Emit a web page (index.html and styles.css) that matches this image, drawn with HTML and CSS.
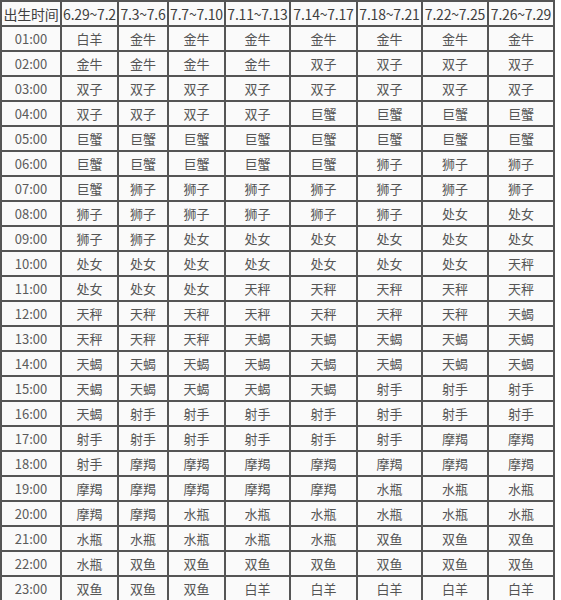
FILE: index.html
```html
<!DOCTYPE html>
<html lang="zh-CN">
<head>
<meta charset="utf-8">
<title>上升星座表</title>
<link rel="stylesheet" href="styles.css">
</head>
<body>
<table class="chart">
<colgroup>
<col class="c1"><col class="c2"><col class="c3"><col class="c4"><col class="c5"><col class="c6"><col class="c7"><col class="c8"><col class="c9">
</colgroup>
<thead>
<tr class="head"><th class="label">出生时间</th><th>6.29~7.2</th><th>7.3~7.6</th><th>7.7~7.10</th><th>7.11~7.13</th><th>7.14~7.17</th><th>7.18~7.21</th><th>7.22~7.25</th><th>7.26~7.29</th></tr>
</thead>
<tbody>
<tr><td class="time">01:00</td><td>白羊</td><td>金牛</td><td>金牛</td><td>金牛</td><td>金牛</td><td>金牛</td><td>金牛</td><td>金牛</td></tr>
<tr><td class="time">02:00</td><td>金牛</td><td>金牛</td><td>金牛</td><td>金牛</td><td>双子</td><td>双子</td><td>双子</td><td>双子</td></tr>
<tr><td class="time">03:00</td><td>双子</td><td>双子</td><td>双子</td><td>双子</td><td>双子</td><td>双子</td><td>双子</td><td>双子</td></tr>
<tr><td class="time">04:00</td><td>双子</td><td>双子</td><td>双子</td><td>双子</td><td>巨蟹</td><td>巨蟹</td><td>巨蟹</td><td>巨蟹</td></tr>
<tr><td class="time">05:00</td><td>巨蟹</td><td>巨蟹</td><td>巨蟹</td><td>巨蟹</td><td>巨蟹</td><td>巨蟹</td><td>巨蟹</td><td>巨蟹</td></tr>
<tr><td class="time">06:00</td><td>巨蟹</td><td>巨蟹</td><td>巨蟹</td><td>巨蟹</td><td>巨蟹</td><td>狮子</td><td>狮子</td><td>狮子</td></tr>
<tr><td class="time">07:00</td><td>巨蟹</td><td>狮子</td><td>狮子</td><td>狮子</td><td>狮子</td><td>狮子</td><td>狮子</td><td>狮子</td></tr>
<tr><td class="time">08:00</td><td>狮子</td><td>狮子</td><td>狮子</td><td>狮子</td><td>狮子</td><td>狮子</td><td>处女</td><td>处女</td></tr>
<tr><td class="time">09:00</td><td>狮子</td><td>狮子</td><td>处女</td><td>处女</td><td>处女</td><td>处女</td><td>处女</td><td>处女</td></tr>
<tr><td class="time">10:00</td><td>处女</td><td>处女</td><td>处女</td><td>处女</td><td>处女</td><td>处女</td><td>处女</td><td>天秤</td></tr>
<tr><td class="time">11:00</td><td>处女</td><td>处女</td><td>处女</td><td>天秤</td><td>天秤</td><td>天秤</td><td>天秤</td><td>天秤</td></tr>
<tr><td class="time">12:00</td><td>天秤</td><td>天秤</td><td>天秤</td><td>天秤</td><td>天秤</td><td>天秤</td><td>天秤</td><td>天蝎</td></tr>
<tr><td class="time">13:00</td><td>天秤</td><td>天秤</td><td>天秤</td><td>天蝎</td><td>天蝎</td><td>天蝎</td><td>天蝎</td><td>天蝎</td></tr>
<tr><td class="time">14:00</td><td>天蝎</td><td>天蝎</td><td>天蝎</td><td>天蝎</td><td>天蝎</td><td>天蝎</td><td>天蝎</td><td>天蝎</td></tr>
<tr><td class="time">15:00</td><td>天蝎</td><td>天蝎</td><td>天蝎</td><td>天蝎</td><td>天蝎</td><td>射手</td><td>射手</td><td>射手</td></tr>
<tr><td class="time">16:00</td><td>天蝎</td><td>射手</td><td>射手</td><td>射手</td><td>射手</td><td>射手</td><td>射手</td><td>射手</td></tr>
<tr><td class="time">17:00</td><td>射手</td><td>射手</td><td>射手</td><td>射手</td><td>射手</td><td>射手</td><td>摩羯</td><td>摩羯</td></tr>
<tr><td class="time">18:00</td><td>射手</td><td>摩羯</td><td>摩羯</td><td>摩羯</td><td>摩羯</td><td>摩羯</td><td>摩羯</td><td>摩羯</td></tr>
<tr><td class="time">19:00</td><td>摩羯</td><td>摩羯</td><td>摩羯</td><td>摩羯</td><td>摩羯</td><td>水瓶</td><td>水瓶</td><td>水瓶</td></tr>
<tr><td class="time">20:00</td><td>摩羯</td><td>摩羯</td><td>水瓶</td><td>水瓶</td><td>水瓶</td><td>水瓶</td><td>水瓶</td><td>水瓶</td></tr>
<tr><td class="time">21:00</td><td>水瓶</td><td>水瓶</td><td>水瓶</td><td>水瓶</td><td>水瓶</td><td>双鱼</td><td>双鱼</td><td>双鱼</td></tr>
<tr><td class="time">22:00</td><td>水瓶</td><td>双鱼</td><td>双鱼</td><td>双鱼</td><td>双鱼</td><td>双鱼</td><td>双鱼</td><td>双鱼</td></tr>
<tr><td class="time">23:00</td><td>双鱼</td><td>双鱼</td><td>双鱼</td><td>白羊</td><td>白羊</td><td>白羊</td><td>白羊</td><td>白羊</td></tr>
</tbody>
</table>
</body>
</html>
```

FILE: styles.css
```css
html, body {
  margin: 0;
  padding: 0;
  background: #ffffff;
}

.chart {
  border-collapse: collapse;
  table-layout: fixed;
  width: 555px;
  background: #fafafa;
  font-family: "Noto Sans CJK SC", "Noto Sans", sans-serif;
  color: #555555;
}

.c1 { width: 60px; }
.c2 { width: 57px; }
.c3 { width: 50px; }
.c4 { width: 57px; }
.c5 { width: 65px; }
.c6 { width: 67px; }
.c7 { width: 65px; }
.c8 { width: 66px; }
.c9 { width: 66px; }

.chart tr {
  height: 25px;
}

.chart th,
.chart td {
  border: 2px solid #555555;
  padding: 0;
  text-align: center;
  vertical-align: middle;
  white-space: nowrap;
  line-height: 1;
}

.chart th {
  font-size: 14px;
  font-weight: normal;
  color: #3f3f3f;
  letter-spacing: -0.2px;
}

.chart td {
  font-size: 13px;
}

.chart td.time {
  font-size: 13px;
  color: #5a5a5a;
}
```
